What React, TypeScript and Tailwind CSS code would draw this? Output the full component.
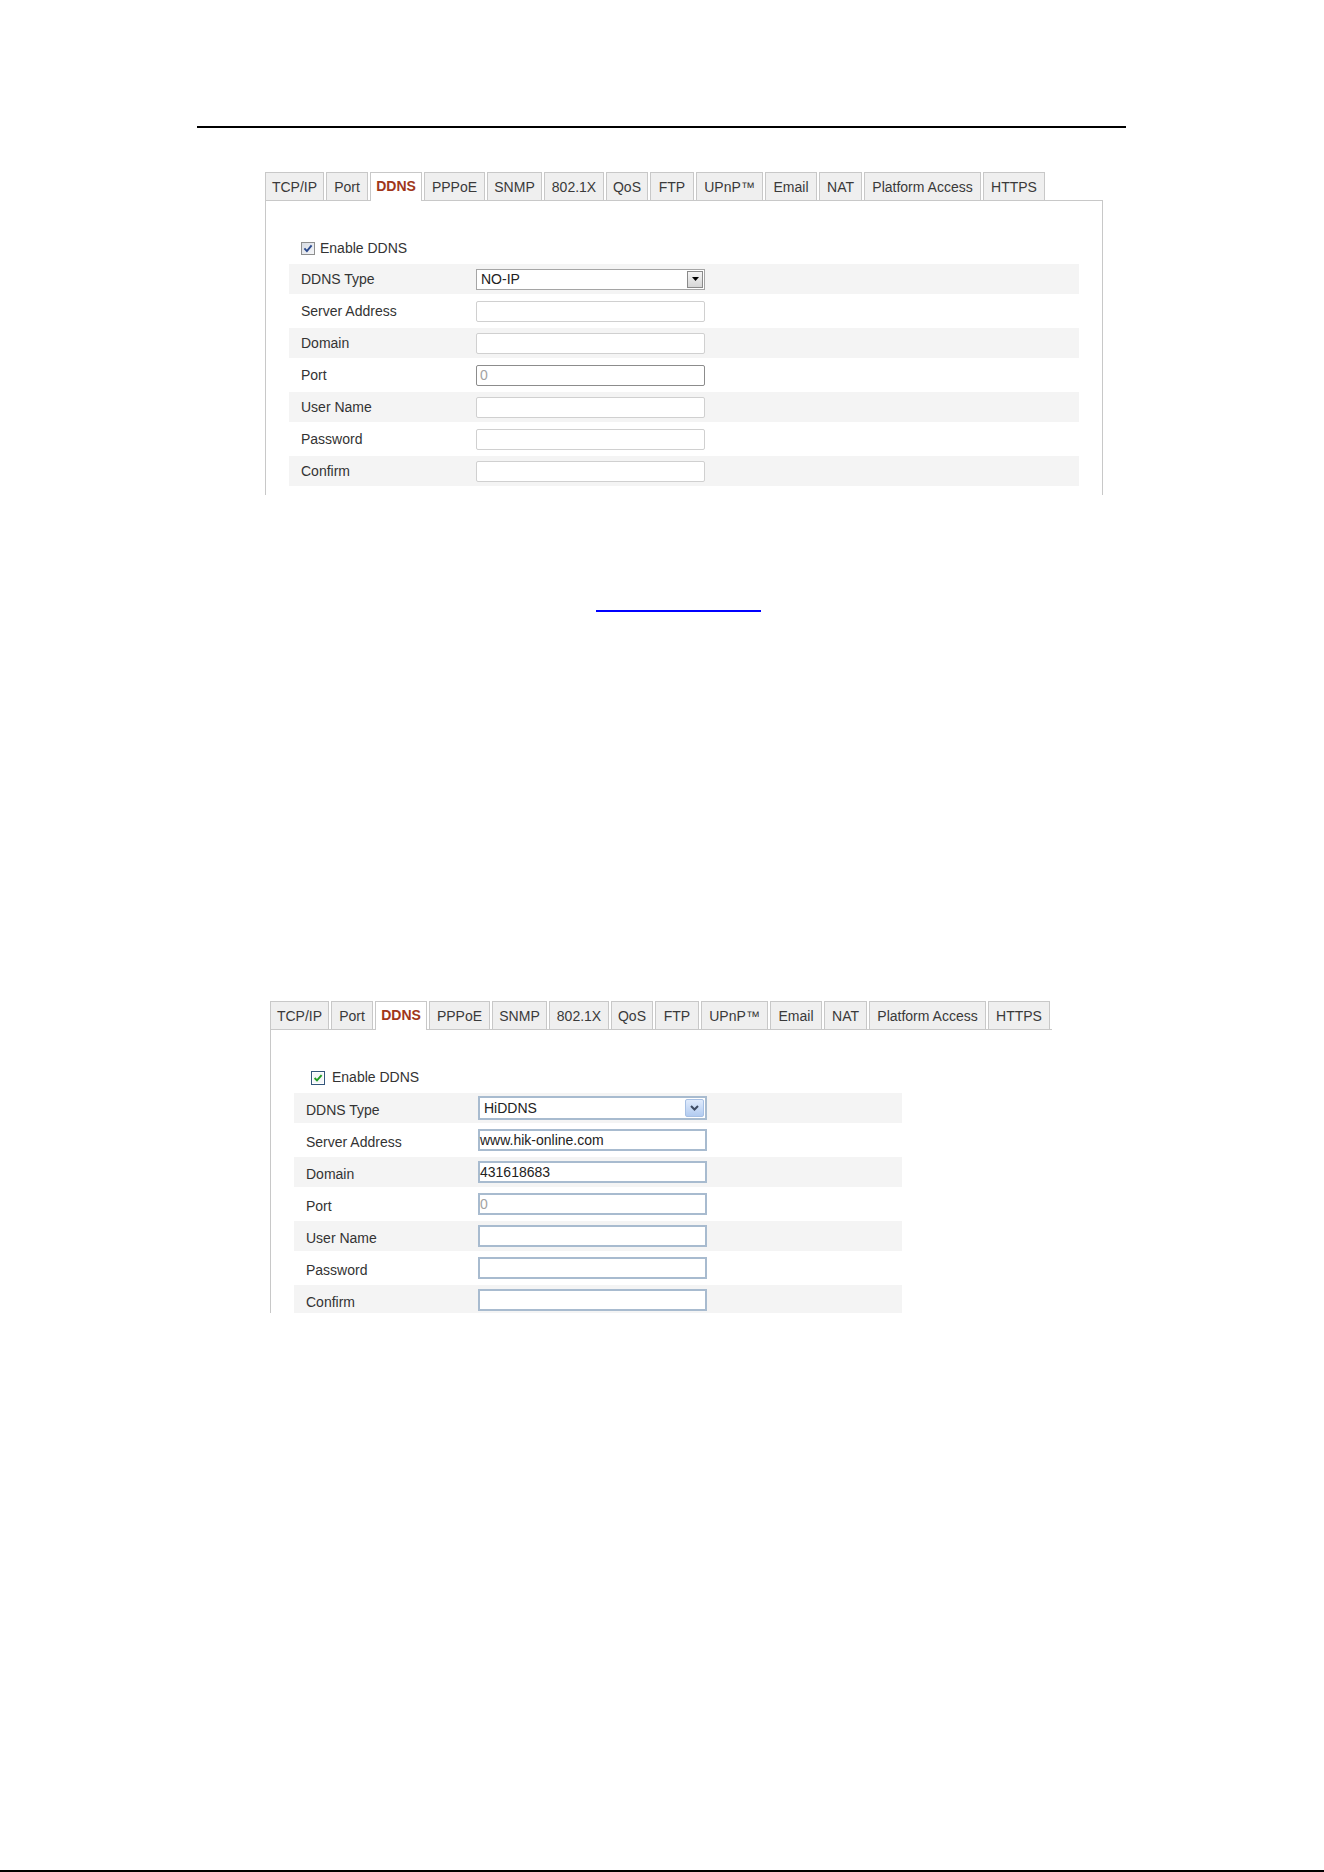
type Skin = "classic" | "aero";

const tabs = [
  { label: "TCP/IP", w: "w-[59px]" },
  { label: "Port", w: "w-[42px]" },
  { label: "DDNS", w: "w-[52px]" },
  { label: "PPPoE", w: "w-[61px]" },
  { label: "SNMP", w: "w-[55px]" },
  { label: "802.1X", w: "w-[60px]" },
  { label: "QoS", w: "w-[42px]" },
  { label: "FTP", w: "w-[44px]" },
  { label: "UPnP™", w: "w-[67px]" },
  { label: "Email", w: "w-[52px]" },
  { label: "NAT", w: "w-[43px]" },
  { label: "Platform Access", w: "w-[117px]" },
  { label: "HTTPS", w: "w-[62px]" },
];

const fields = [
  "DDNS Type",
  "Server Address",
  "Domain",
  "Port",
  "User Name",
  "Password",
  "Confirm",
];

const values: Record<Skin, Record<string, string>> = {
  classic: { "DDNS Type": "NO-IP", Port: "0" },
  aero: {
    "DDNS Type": "HiDDNS",
    "Server Address": "www.hik-online.com",
    Domain: "431618683",
    Port: "0",
  },
};

function TabStrip() {
  return (
    <div className="flex h-[28px] items-start gap-[2px]">
      {tabs.map((t) =>
        t.label === "DDNS" ? (
          <div
            key={t.label}
            className={`${t.w} relative z-10 -mb-px flex h-[29px] items-center justify-center border border-b-0 border-[#c8c8c8] bg-white pb-px text-[14px] font-bold text-[#a0361a]`}
          >
            {t.label}
          </div>
        ) : (
          <div
            key={t.label}
            className={`${t.w} flex h-[28px] items-center justify-center whitespace-nowrap border border-b-0 border-[#c8c8c8] bg-[#efefef] pt-[2px] text-[14px] text-[#3a3a3a]`}
          >
            {t.label}
          </div>
        )
      )}
    </div>
  );
}

function CheckBox({ skin }: { skin: Skin }) {
  if (skin === "classic") {
    return (
      <svg width="14" height="13" viewBox="0 0 14 13">
        <defs>
          <linearGradient id="cbClassic" x1="0" y1="0" x2="1" y2="1">
            <stop offset="0" stopColor="#d6dbe3" />
            <stop offset="1" stopColor="#f6f7f9" />
          </linearGradient>
        </defs>
        <rect x="0.5" y="0.5" width="13" height="12" fill="url(#cbClassic)" stroke="#8e8f8f" />
        <path d="M3.4 6.4 L5.9 9.1 L10.6 3.3" fill="none" stroke="#2b4a8e" strokeWidth="1.9" />
      </svg>
    );
  }
  return (
    <svg width="14" height="14" viewBox="0 0 14 14">
      <rect x="0.5" y="0.5" width="13" height="13" fill="#fff" stroke="#34577c" />
      <rect x="2" y="2" width="10" height="10" fill="#f4f6f8" />
      <path d="M3.6 7 L6 9.4 L10.6 4.2" fill="none" stroke="#1f9d22" strokeWidth="1.9" />
    </svg>
  );
}

function Field({ skin, name }: { skin: Skin; name: string }) {
  const value = values[skin][name] ?? "";
  const muted = name === "Port";

  if (name === "DDNS Type") {
    return skin === "classic" ? (
      <div className="flex h-[21px] w-[229px] items-center border border-[#a5a5a5] bg-white pl-[4px] text-[14px] text-[#222]">
        <span className="flex-1">{value}</span>
        <div className="m-px flex h-[17px] w-[16px] items-center justify-center border border-[#8a8a8a] bg-gradient-to-b from-[#f5f5f5] to-[#d6d6d6]">
          <svg width="7" height="4" viewBox="0 0 7 4">
            <polygon points="0,0 7,0 3.5,4" fill="#000" />
          </svg>
        </div>
      </div>
    ) : (
      <div className="flex h-[24px] w-[229px] items-center border-2 border-[#a8bbcf] bg-white pl-[4px] text-[14px] text-[#222]">
        <span className="flex-1">{value}</span>
        <div className="mr-px flex h-[18px] w-[19px] items-center justify-center rounded-[2px] border border-[#a7c0e4] bg-gradient-to-b from-[#e0ebfc] to-[#b2cbf0]">
          <svg width="9" height="6" viewBox="0 0 9 6">
            <path d="M1 1 L4.5 4.5 L8 1" fill="none" stroke="#3f4c63" strokeWidth="2" />
          </svg>
        </div>
      </div>
    );
  }

  const tone = muted ? "text-[#a3a3a3]" : "text-[#222]";
  return skin === "classic" ? (
    <div
      className={`flex h-[21px] w-[229px] items-center rounded-[2px] border bg-white pl-[3px] text-[14px] ${
        muted ? "border-[#8c8c8c]" : "border-[#d0d0d0]"
      } ${tone}`}
    >
      {value}
    </div>
  ) : (
    <div
      className={`flex h-[22px] w-[229px] items-center border-2 border-[#a8bbcf] bg-white text-[14px] ${tone}`}
    >
      {value}
    </div>
  );
}

function DdnsForm({ skin }: { skin: Skin }) {
  // the newer skin sits its labels a few pixels below the row centre
  const label =
    skin === "classic" ? "w-[187px]" : "w-[184px] pt-[5px]";
  return (
    <>
      <div
        className={`flex items-center ${
          skin === "classic" ? "h-[32px] gap-[5px] pl-[12px]" : "h-[31px] gap-[7px] pl-[17px]"
        }`}
      >
        <CheckBox skin={skin} />
        <span className="text-[14px] text-[#333]">Enable DDNS</span>
      </div>
      {fields.map((f, i) => (
        <div
          key={f}
          className={`flex items-center ${i % 2 === 0 ? "h-[30px] bg-[#f4f4f4]" : "h-[34px] bg-white"}`}
        >
          <span className={`${label} shrink-0 pl-[12px] text-[14px] text-[#333]`}>{f}</span>
          <Field skin={skin} name={f} />
        </div>
      ))}
    </>
  );
}

export default function App() {
  return (
    <div className="flex h-[1872px] w-full flex-col overflow-hidden bg-white font-['Liberation_Sans',Arial,sans-serif]">
      <div className="ml-[197px] mt-[126px] h-[2px] w-[929px] bg-black" />

      {/* NO-IP settings */}
      <div className="ml-[265px] mt-[44px]">
        <TabStrip />
        <div className="h-[295px] w-[838px] border-x border-t border-[#c8c8c8] px-[23px] pt-[31px]">
          <DdnsForm skin="classic" />
        </div>
      </div>

      <a className="ml-[596px] mt-[115px] block h-[2px] w-[165px] bg-[#0000ff]" />

      {/* HiDDNS settings */}
      <div className="ml-[270px] mt-[389px]">
        <TabStrip />
        <div className="h-[284px] w-[782px] overflow-hidden border-l border-t border-[#c8c8c8] pl-[23px] pt-[32px]">
          <div className="w-[608px]">
            <DdnsForm skin="aero" />
          </div>
        </div>
      </div>

      <div className="flex-1" />
      <div className="h-[2px] w-full bg-black" />
    </div>
  );
}
